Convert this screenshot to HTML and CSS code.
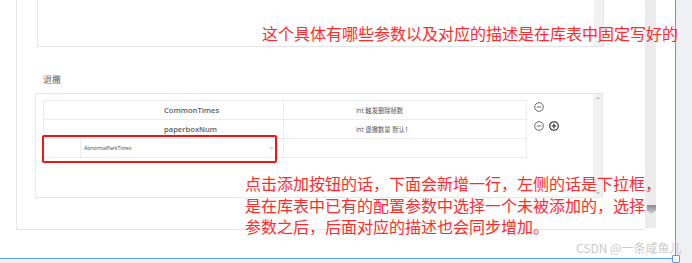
FILE: index.html
```html
<!DOCTYPE html>
<html lang="zh-CN">

<head>
    <meta charset="UTF-8">
    <meta name="viewport" content="width=device-width, initial-scale=1.0">
    <title>退撒配置</title>
    <link rel="stylesheet" href="styles.css">
</head>

<body>
    <div class="shot">
        <div class="frame">
            <div class="page">
                <div class="outer">
                    <div class="box1">
                        <div class="bar"><span class="arrow down"></span></div>
                    </div>
                    <div class="label">退撒</div>
                    <div class="box2">
                        <div class="box2-body">
                            <div class="grid">
                                <div class="row">
                                    <div class="cell name">CommonTimes</div>
                                    <div class="cell desc">int 触发删除帧数</div>
                                </div>
                                <div class="row">
                                    <div class="cell name">paperboxNum</div>
                                    <div class="cell desc">int 退撒数量 默认1</div>
                                </div>
                                <div class="row">
                                    <div class="cell pick">
                                        <div class="blank"></div>
                                        <div class="select">
                                            <span>AbnormalParkTimes</span>
                                            <span class="chev"></span>
                                        </div>
                                    </div>
                                    <div class="cell desc"></div>
                                </div>
                            </div>
                            <div class="ops">
                                <div class="ops-row">
                                    <svg class="btn" viewBox="0 0 10 10"><circle cx="5" cy="5" r="4.3"/><path d="M2.8 5h4.4"/></svg>
                                </div>
                                <div class="ops-row">
                                    <svg class="btn" viewBox="0 0 10 10"><circle cx="5" cy="5" r="4.3"/><path d="M2.8 5h4.4"/></svg>
                                    <svg class="btn plus" viewBox="0 0 10 10"><circle cx="5" cy="5" r="4.3"/><path d="M2.6 5h4.8M5 2.6v4.8"/></svg>
                                </div>
                            </div>
                        </div>
                        <div class="bar bar2">
                            <span class="arrow up"></span>
                            <span class="arrow down"></span>
                        </div>
                    </div>
                </div>
                <div class="page-bar"><span class="grip"></span></div>
            </div>
        </div>

        <!-- 标注 -->
        <div class="note note-top">这个具体有哪些参数以及对应的描述是在库表中固定写好的</div>
        <div class="note note-add">点击添加按钮的话，下面会新增一行，左侧的话是下拉框，<br>是在库表中已有的配置参数中选择一个未被添加的，选择<br>参数之后，后面对应的描述也会同步增加。</div>
        <div class="mark"></div>
        <div class="watermark">CSDN @一条咸鱼儿</div>
        <span class="handle"></span>
    </div>
</body>
</html>
```

FILE: styles.css
```css
body{
    margin: 0;
    background-color: #eef0f3;
    font-family: "Open Sans", "Noto Sans CJK SC", sans-serif;
}
.shot{
    position: relative;
    width: 692px;
    height: 263px;
    overflow: hidden;
}
.frame{
    width: 675px;
    height: 258px;
    background-color: #fff;
    border-right: 1px solid #5a9ce8;
    border-bottom: 1px solid #5a9ce8;
    overflow: hidden;
}
.page{
    display: flex;
    padding-left: 16px;
}
.outer{
    box-sizing: border-box;
    width: 629px;
    height: 230px;
    padding-left: 20px;
    border-left: 1px solid #e6e6e6;
    border-bottom: 1px solid #e6e6e6;
}
.box1{
    box-sizing: border-box;
    width: 567px;
    height: 47px;
    display: flex;
    justify-content: flex-end;
    border: 1px solid #e6e6e6;
    border-top: none;
}
.bar{
    width: 9px;
    background-color: #f1f1f1;
    display: flex;
    flex-direction: column;
    justify-content: flex-end;
    align-items: center;
    padding: 3px 0;
    box-sizing: border-box;
}
.bar2{
    justify-content: space-between;
}
.arrow{
    width: 0;
    height: 0;
    border-left: 2px solid transparent;
    border-right: 2px solid transparent;
}
.arrow.down{
    border-top: 2px solid #b5b5b5;
}
.arrow.up{
    border-bottom: 2px solid #b5b5b5;
}
.label{
    margin-top: 27px;
    margin-left: 6px;
    font-size: 9px;
    line-height: 12px;
    color: #666;
}
.box2{
    box-sizing: border-box;
    width: 568px;
    height: 105px;
    margin-top: 7px;
    margin-left: -2px;
    display: flex;
    border: 1px solid #e8e8e8;
}
.box2-body{
    flex: 1;
    display: flex;
    align-items: flex-start;
    padding: 6px 0 0 7px;
}
.grid{
    width: 483px;
    border-top: 1px solid #ececec;
    border-left: 1px solid #ececec;
}
.row{
    display: flex;
    height: 19px;
    box-sizing: border-box;
    border-bottom: 1px solid #ececec;
}
.cell{
    box-sizing: border-box;
    border-right: 1px solid #ececec;
    color: #555;
    display: flex;
    align-items: center;
}
.name{
    width: 240px;
    padding-left: 120px;
    font-size: 7.6px;
    font-weight: 600;
    color: #606060;
}
.desc{
    flex: 1;
    padding-left: 72px;
    font-size: 6.3px;
}
.pick{
    width: 240px;
    align-items: stretch;
}
.blank{
    width: 36px;
    border-right: 1px solid #ececec;
}
.select{
    flex: 1;
    display: flex;
    align-items: center;
    justify-content: space-between;
    padding: 0 10px 0 3px;
    font-size: 5px;
    color: #444;
}
.chev{
    width: 2px;
    height: 2px;
    margin-bottom: 2px;
    border-right: 1px solid #c4c4c4;
    border-bottom: 1px solid #c4c4c4;
    transform: rotate(45deg);
}
.ops{
    margin-left: 7px;
    padding-top: 2px;
}
.ops-row{
    display: flex;
    gap: 5px;
    height: 19px;
}
.btn{
    width: 10px;
    height: 10px;
    fill: none;
    stroke: #444;
    stroke-width: 0.8;
}
.btn.plus{
    stroke: #222;
    stroke-width: 1.1;
}
.page-bar{
    width: 11px;
    height: 228px;
    background-color: #ececec;
    display: flex;
    flex-direction: column;
    justify-content: flex-end;
    align-items: flex-end;
    padding-bottom: 14px;
    box-sizing: border-box;
}
.grip{
    width: 9px;
    height: 9px;
    background: linear-gradient(#8a8a8a, #d0d0d0);
    clip-path: polygon(0 0, 100% 0, 100% 60%, 50% 100%, 0 60%);
}
.note{
    position: absolute;
    font-family: "Noto Sans CJK SC", sans-serif;
    font-size: 16px;
    color: #ff2a2a;
    white-space: nowrap;
}
.note-top{
    left: 262px;
    top: 23px;
    line-height: 20px;
}
.note-add{
    left: 245px;
    top: 173px;
    line-height: 21.5px;
}
.mark{
    position: absolute;
    left: 42px;
    top: 135px;
    width: 235px;
    height: 28px;
    box-sizing: border-box;
    border: 2px solid #f01414;
    border-radius: 2px;
}
.watermark{
    position: absolute;
    left: 576px;
    top: 240px;
    font-family: "Noto Sans CJK SC", sans-serif;
    font-size: 12px;
    line-height: 16px;
    color: #cacaca;
    white-space: nowrap;
}
.handle{
    position: absolute;
    left: 672px;
    top: 255px;
    width: 6px;
    height: 6px;
    background-color: #fff;
    border: 1px solid #5a9ce8;
    border-radius: 1px;
}
```
